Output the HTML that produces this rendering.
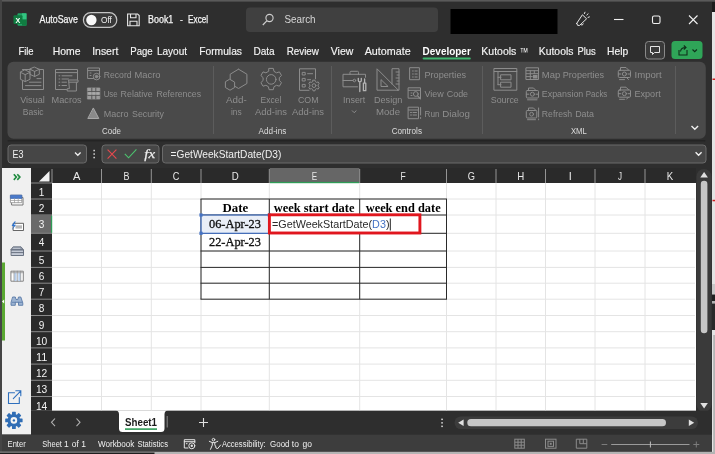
<!DOCTYPE html>
<html lang="en">
<head>
<meta charset="utf-8">
<title>Book1 - Excel</title>
<style>
html,body{margin:0;padding:0;background:#2b2b2b;overflow:hidden}
body{width:715px;height:454px}
svg{display:block;will-change:transform}
text{white-space:pre}
.s{font-family:"Liberation Sans",sans-serif}
.f{font-family:"Liberation Serif",serif}
</style>
</head>
<body>
<svg width="715" height="454" viewBox="0 0 715 454">
<rect x="0" y="0" width="715" height="454" fill="#2e2e2e" />
<rect x="17.5" y="13.3" width="9" height="12.4" fill="#21a366" rx="1" />
<rect x="22" y="13.3" width="4.5" height="6.2" fill="#33c481" />
<rect x="22" y="19.5" width="4.5" height="6.2" fill="#107c41" />
<rect x="13.5" y="15.3" width="9" height="8.8" fill="#107c41" rx="1" />
<text class="s" x="15.6" y="22.6" font-size="7.5" fill="#ffffff" font-weight="bold" textLength="4.8" lengthAdjust="spacingAndGlyphs">X</text>
<text class="s" x="39.5" y="23.4" font-size="10.3" fill="#f4f4f4" stroke="#f4f4f4" stroke-width="0.25" textLength="38.4" lengthAdjust="spacingAndGlyphs">AutoSave</text>
<rect x="83.4" y="12.6" width="33.4" height="14.8" fill="#383838" rx="7.4" stroke="#c4c4c4" stroke-width="1.2" />
<circle cx="91.4" cy="20" r="5.2" fill="#f8f8f8"/>
<text class="s" x="100.9" y="23.1" font-size="9.4" fill="#f0f0f0" textLength="11.0" lengthAdjust="spacingAndGlyphs">Off</text>
<path d="M127.6 14 h10 l1.600 1.600 v10.200 h-11.600 z" stroke="#e6e6e6" fill="none" stroke-width="1.1" />
<path d="M130.500 14 v3.800 h5.500 v-3.800 M130 25.800 v-4.600 h7 v4.600" stroke="#e6e6e6" fill="none" stroke-width="1.1" />
<text class="s" x="148.1" y="23.4" font-size="10.3" fill="#f4f4f4" stroke="#f4f4f4" stroke-width="0.25" textLength="25.2" lengthAdjust="spacingAndGlyphs">Book1</text>
<text class="s" x="181.35" y="23.4" font-size="10.3" fill="#f4f4f4" text-anchor="middle">-</text>
<text class="s" x="188.1" y="23.4" font-size="10.3" fill="#f4f4f4" stroke="#f4f4f4" stroke-width="0.25" textLength="20.1" lengthAdjust="spacingAndGlyphs">Excel</text>
<rect x="246" y="7.5" width="192" height="24.5" fill="#404040" rx="4" />
<circle cx="269.5" cy="18" r="3.6" fill="none" stroke="#d0d0d0" stroke-width="1.1"/>
<line x1="266.8" y1="20.8" x2="262.8" y2="25" stroke="#d0d0d0" stroke-width="1.2" />
<text class="s" x="284.4" y="23" font-size="10.4" fill="#d6d6d6" textLength="31.2" lengthAdjust="spacingAndGlyphs">Search</text>
<rect x="450.5" y="9" width="107" height="25" fill="#000000" />
<path d="M576.7 23.4 L582.4 14.8 L586.6 18.8 L579.6 25.4 Q577.2 26.6 576.7 23.4 Z M580.6 24.7 q1.6 1.4 2.8 -0.7 M584.4 13.6 l0.6 -1.4 M586.8 15 l1.3 -1.2 M588 17.4 l1.4 -0.5" stroke="#e6e6e6" fill="none" stroke-width="1" stroke-linecap="round" stroke-linejoin="round"/>
<line x1="614" y1="19.5" x2="623.5" y2="19.5" stroke="#f0f0f0" stroke-width="1.1" />
<rect x="652.5" y="16" width="7.5" height="7.5" fill="none" rx="1.5" stroke="#f0f0f0" stroke-width="1.1" />
<path d="M689 15.5 l8.5 8.5 M697.5 15.5 l-8.5 8.5" stroke="#f0f0f0" fill="none" stroke-width="1.1" />
<text class="s" x="18.4" y="54.5" font-size="10.4" fill="#f4f4f4" stroke="#f4f4f4" stroke-width="0.15" textLength="15.2" lengthAdjust="spacingAndGlyphs">File</text>
<text class="s" x="52.8" y="54.5" font-size="10.4" fill="#f4f4f4" stroke="#f4f4f4" stroke-width="0.15" textLength="27.8" lengthAdjust="spacingAndGlyphs">Home</text>
<text class="s" x="92.2" y="54.5" font-size="10.4" fill="#f4f4f4" stroke="#f4f4f4" stroke-width="0.15" textLength="26.1" lengthAdjust="spacingAndGlyphs">Insert</text>
<text class="s" x="130.3" y="54.5" font-size="10.4" fill="#f4f4f4" stroke="#f4f4f4" stroke-width="0.15" textLength="22.4" lengthAdjust="spacingAndGlyphs">Page</text>
<text class="s" x="156.9" y="54.5" font-size="10.4" fill="#f4f4f4" stroke="#f4f4f4" stroke-width="0.15" textLength="30.2" lengthAdjust="spacingAndGlyphs">Layout</text>
<text class="s" x="199.2" y="54.5" font-size="10.4" fill="#f4f4f4" stroke="#f4f4f4" stroke-width="0.15" textLength="42.8" lengthAdjust="spacingAndGlyphs">Formulas</text>
<text class="s" x="253.4" y="54.5" font-size="10.4" fill="#f4f4f4" stroke="#f4f4f4" stroke-width="0.15" textLength="21.3" lengthAdjust="spacingAndGlyphs">Data</text>
<text class="s" x="286.7" y="54.5" font-size="10.4" fill="#f4f4f4" stroke="#f4f4f4" stroke-width="0.15" textLength="32.2" lengthAdjust="spacingAndGlyphs">Review</text>
<text class="s" x="330.8" y="54.5" font-size="10.4" fill="#f4f4f4" stroke="#f4f4f4" stroke-width="0.15" textLength="22.5" lengthAdjust="spacingAndGlyphs">View</text>
<text class="s" x="364.7" y="54.5" font-size="10.4" fill="#f4f4f4" stroke="#f4f4f4" stroke-width="0.15" textLength="46.0" lengthAdjust="spacingAndGlyphs">Automate</text>
<text class="s" x="481.3" y="54.5" font-size="10.4" fill="#f4f4f4" stroke="#f4f4f4" stroke-width="0.15" textLength="35.1" lengthAdjust="spacingAndGlyphs">Kutools</text>
<text class="s" x="538.8" y="54.5" font-size="10.4" fill="#f4f4f4" stroke="#f4f4f4" stroke-width="0.15" textLength="34.6" lengthAdjust="spacingAndGlyphs">Kutools</text>
<text class="s" x="577.5" y="54.5" font-size="10.4" fill="#f4f4f4" stroke="#f4f4f4" stroke-width="0.15" textLength="18.3" lengthAdjust="spacingAndGlyphs">Plus</text>
<text class="s" x="607" y="54.5" font-size="10.4" fill="#f4f4f4" stroke="#f4f4f4" stroke-width="0.15" textLength="21.2" lengthAdjust="spacingAndGlyphs">Help</text>
<text class="s" x="519.7" y="55.6" font-size="12" fill="#f4f4f4" textLength="8.5" lengthAdjust="spacingAndGlyphs">™</text>
<text class="s" x="422.6" y="54.5" font-size="10.4" fill="#ffffff" font-weight="bold" textLength="48.2" lengthAdjust="spacingAndGlyphs">Developer</text>
<rect x="422.6" y="57.5" width="48.2" height="2" fill="#3fb56e" rx="1" />
<rect x="645.5" y="41.5" width="19" height="17.5" fill="#3a3a3a" rx="3" stroke="#8a8a8a" stroke-width="1" />
<path d="M650.5 46.5 h9 v6 h-5 l-2 2 v-2 h-2 z" stroke="#e6e6e6" fill="none" stroke-width="1" />
<rect x="671.5" y="41" width="31" height="18" fill="#2fa558" rx="3.5" />
<path d="M679 50 v5 h8 v-5 M680.5 51.5 q0.5 -4 5 -4 M683.8 45.5 l2.2 2 l-2.2 2" stroke="#0f2f1a" fill="none" stroke-width="1.1" />
<path d="M692.5 49.5 l2.2 2.2 l2.2 -2.2" stroke="#0f2f1a" fill="none" stroke-width="1.2" />
<rect x="7.5" y="140" width="698" height="1.6" fill="#242424" rx="0.8" />
<rect x="7.5" y="61.8" width="698.3" height="77" fill="#4a4a4a" rx="6" />
<line x1="213.5" y1="66" x2="213.5" y2="134" stroke="#5c5c5c" stroke-width="1" />
<line x1="331.5" y1="66" x2="331.5" y2="134" stroke="#5c5c5c" stroke-width="1" />
<line x1="482.5" y1="66" x2="482.5" y2="134" stroke="#5c5c5c" stroke-width="1" />
<line x1="675.5" y1="66" x2="675.5" y2="134" stroke="#5c5c5c" stroke-width="1" />
<text class="s" x="20.2" y="103" font-size="9.4" fill="#8e8e8e" textLength="24.6" lengthAdjust="spacingAndGlyphs">Visual</text>
<text class="s" x="22.7" y="115.4" font-size="9.4" fill="#8e8e8e" textLength="20.9" lengthAdjust="spacingAndGlyphs">Basic</text>
<text class="s" x="51.6" y="103" font-size="9.4" fill="#8e8e8e" textLength="30.0" lengthAdjust="spacingAndGlyphs">Macros</text>
<text class="s" x="103.7" y="77.6" font-size="9.4" fill="#8e8e8e" textLength="27.9" lengthAdjust="spacingAndGlyphs">Record</text>
<text class="s" x="134.5" y="77.6" font-size="9.4" fill="#8e8e8e" textLength="26.0" lengthAdjust="spacingAndGlyphs">Macro</text>
<text class="s" x="103.7" y="97.2" font-size="9.4" fill="#8e8e8e" textLength="13.9" lengthAdjust="spacingAndGlyphs">Use</text>
<text class="s" x="120.6" y="97.2" font-size="9.4" fill="#8e8e8e" textLength="32.0" lengthAdjust="spacingAndGlyphs">Relative</text>
<text class="s" x="156.5" y="97.2" font-size="9.4" fill="#8e8e8e" textLength="44.5" lengthAdjust="spacingAndGlyphs">References</text>
<text class="s" x="103.7" y="116.9" font-size="9.4" fill="#8e8e8e" textLength="24.9" lengthAdjust="spacingAndGlyphs">Macro</text>
<text class="s" x="132" y="116.9" font-size="9.4" fill="#8e8e8e" textLength="31.9" lengthAdjust="spacingAndGlyphs">Security</text>
<text class="s" x="102" y="133.8" font-size="9.2" fill="#dcdcdc" textLength="19" lengthAdjust="spacingAndGlyphs">Code</text>
<text class="s" x="226" y="103" font-size="9.4" fill="#8e8e8e" textLength="20.7" lengthAdjust="spacingAndGlyphs">Add-</text>
<text class="s" x="231" y="115.4" font-size="9.4" fill="#8e8e8e" textLength="10.7" lengthAdjust="spacingAndGlyphs">ins</text>
<text class="s" x="260.6" y="103" font-size="9.4" fill="#8e8e8e" textLength="20.7" lengthAdjust="spacingAndGlyphs">Excel</text>
<text class="s" x="255" y="115.4" font-size="9.4" fill="#8e8e8e" textLength="32" lengthAdjust="spacingAndGlyphs">Add-ins</text>
<text class="s" x="297.9" y="103" font-size="9.4" fill="#8e8e8e" textLength="20.6" lengthAdjust="spacingAndGlyphs">COM</text>
<text class="s" x="292" y="115.4" font-size="9.4" fill="#8e8e8e" textLength="32" lengthAdjust="spacingAndGlyphs">Add-ins</text>
<text class="s" x="258.6" y="133.8" font-size="9.2" fill="#dcdcdc" textLength="27.7" lengthAdjust="spacingAndGlyphs">Add-ins</text>
<text class="s" x="343" y="103" font-size="9.4" fill="#8e8e8e" textLength="22.3" lengthAdjust="spacingAndGlyphs">Insert</text>
<path d="M352 110.5 l2.2 2.2 l2.2 -2.2" stroke="#8e8e8e" fill="none" stroke-width="1" />
<text class="s" x="374" y="103" font-size="9.4" fill="#8e8e8e" textLength="28.3" lengthAdjust="spacingAndGlyphs">Design</text>
<text class="s" x="376" y="115.4" font-size="9.4" fill="#8e8e8e" textLength="24" lengthAdjust="spacingAndGlyphs">Mode</text>
<text class="s" x="424.5" y="77.6" font-size="9.4" fill="#8e8e8e" textLength="41.5" lengthAdjust="spacingAndGlyphs">Properties</text>
<text class="s" x="424.5" y="97.2" font-size="9.4" fill="#8e8e8e" textLength="19.2" lengthAdjust="spacingAndGlyphs">View</text>
<text class="s" x="446.7" y="97.2" font-size="9.4" fill="#8e8e8e" textLength="21.4" lengthAdjust="spacingAndGlyphs">Code</text>
<text class="s" x="424.5" y="116.9" font-size="9.4" fill="#8e8e8e" textLength="15.0" lengthAdjust="spacingAndGlyphs">Run</text>
<text class="s" x="442.3" y="116.9" font-size="9.4" fill="#8e8e8e" textLength="27.6" lengthAdjust="spacingAndGlyphs">Dialog</text>
<text class="s" x="391.7" y="133.8" font-size="9.2" fill="#dcdcdc" textLength="30.3" lengthAdjust="spacingAndGlyphs">Controls</text>
<text class="s" x="490.8" y="103" font-size="9.4" fill="#8e8e8e" textLength="28.0" lengthAdjust="spacingAndGlyphs">Source</text>
<text class="s" x="541.8" y="77.6" font-size="9.4" fill="#8e8e8e" textLength="18.4" lengthAdjust="spacingAndGlyphs">Map</text>
<text class="s" x="562.8" y="77.6" font-size="9.4" fill="#8e8e8e" textLength="41.3" lengthAdjust="spacingAndGlyphs">Properties</text>
<text class="s" x="541.8" y="97.2" font-size="9.4" fill="#8e8e8e" textLength="41.5" lengthAdjust="spacingAndGlyphs">Expansion</text>
<text class="s" x="585.8" y="97.2" font-size="9.4" fill="#8e8e8e" textLength="21.5" lengthAdjust="spacingAndGlyphs">Packs</text>
<text class="s" x="541.8" y="116.9" font-size="9.4" fill="#8e8e8e" textLength="30.4" lengthAdjust="spacingAndGlyphs">Refresh</text>
<text class="s" x="575.2" y="116.9" font-size="9.4" fill="#8e8e8e" textLength="18.8" lengthAdjust="spacingAndGlyphs">Data</text>
<text class="s" x="634.5" y="77.6" font-size="9.4" fill="#8e8e8e" textLength="27.2" lengthAdjust="spacingAndGlyphs">Import</text>
<text class="s" x="634.5" y="97.2" font-size="9.4" fill="#8e8e8e" textLength="26.2" lengthAdjust="spacingAndGlyphs">Export</text>
<text class="s" x="571" y="133.8" font-size="9.2" fill="#dcdcdc" textLength="15.8" lengthAdjust="spacingAndGlyphs">XML</text>
<path d="M691.5 126 l3.3 3.3 l3.3 -3.3" stroke="#f0f0f0" fill="none" stroke-width="1.4" />
<g fill="none" stroke="#8c8c8c" stroke-width="1" stroke-linejoin="round" stroke-linecap="round">
<!-- Visual Basic -->
<path d="M31 69.5 h-8.5 M39.5 69.5 h4 v20 h-21 v-8.5"/>
<path d="M25.2 70 l4.8 2.300 v7 l-4.800 2.300 l-4.800 -2.300 v-7 z M20.400 72.300 l4.800 2.300 l4.800 -2.300 M25.200 74.600 v7"/>
<path d="M34.600 67.200 l4.700 2.100 v5 l-4.700 2.200 l-4.700 -2.200 v-5 z M29.900 69.300 l4.700 2.100 l4.700 -2.100 M34.600 71.400 v5.100"/>
<path d="M37 78.6 h4 M29.5 82.2 h11.5 M25.5 85.6 h15.5"/>
<!-- Macros -->
<path d="M66.5 89.5 h-11 v-20 h22 v10 M55.5 72.6 h22"/>
<path d="M59 75.8 h.8 M62 75.8 h10 M59 79 h.8 M62 79 h6.5 M59 82.2 h.8 M62 82.2 h4.5 M59 85.5 h.8 M62 85.5 h4.5"/>
<path d="M69 80 h9 v2.2 h-1.6 v8.8 h-9.2 v-2.3 h1.8 z M76.4 82.2 h-7.4"/>
<!-- Record macro -->
<rect x="88" y="68" width="11.5" height="10.5"/>
<path d="M88 70.6 h11.5 M90 73 h1 M90 75.5 h1"/>
<circle cx="96.6" cy="76.6" r="3.3" fill="#4a4a4a"/>
<circle cx="96.6" cy="76.6" r="1.3" fill="#8c8c8c"/>
<!-- Use relative refs -->
<rect x="87.800" y="88" width="12" height="11" fill="#9c9c9c" stroke="#9c9c9c" stroke-width="0.800"/>
<path d="M91.800 88 v11 M95.800 88 v11 M87.800 91.600 h12 M87.800 95.300 h12" stroke="#555555" stroke-width="1"/>
<rect x="88.300" y="92.100" width="11" height="2.700" fill="#b4b4b4" stroke="none" opacity="0.600"/>
<!-- Macro security -->
<path d="M93.5 108.3 l5.3 10.2 h-10.6 z" fill="#8a8a8a" stroke="#a8a8a8"/>
<!-- Add-ins -->
<path d="M238.5 69.2 l8.4 5 v9.3 l-8.4 5 l-3.6 -2.2 M230.2 79 v-4.8 l8.3 -5"/>
<path d="M230 79.4 l4.6 2.7 v5.4 l-4.6 2.7 l-4.6 -2.7 v-5.4 z"/>
<!-- Excel add-ins gear -->
<circle cx="271.2" cy="79.4" r="4.8"/>
<path id="gearL" d="M269.1 68.4 h4.2 l0.7 3 l2.5 1.4 l2.9 -0.9 l2.1 3.6 l-2.2 2.1 v2.9 l2.2 2.1 l-2.1 3.6 l-2.9 -0.9 l-2.5 1.4 l-0.7 3 h-4.2 l-0.7 -3 l-2.5 -1.4 l-2.9 0.9 l-2.1 -3.6 l2.2 -2.1 v-2.9 l-2.2 -2.1 l2.1 -3.6 l2.9 0.9 l2.5 -1.4 z"/>
<!-- COM add-ins -->
<path d="M309 90.3 h-9.5 v-21.5 h16 v10"/>
<path d="M302.6 72.4 h2.6 v2.6 h-2.6 z M302.6 78.4 h2.6 v2.6 h-2.6 z M302.6 84.4 h2.6 v2.6 h-2.6 z M307.6 73.7 h5 M307.6 79.7 h3"/>
<circle cx="314" cy="85.6" r="2"/>
<path d="M313 80.2 h2 l0.4 1.5 l1.3 0.7 l1.5 -0.5 l1 1.8 l-1.1 1 v1.6 l1.1 1 l-1 1.8 l-1.5 -0.5 l-1.3 0.7 l-0.4 1.5 h-2 l-0.4 -1.5 l-1.3 -0.7 l-1.5 0.5 l-1 -1.8 l1.1 -1 v-1.6 l-1.1 -1 l1 -1.8 l1.5 0.5 l1.3 -0.7 z" fill="#4a4a4a"/>
<circle cx="314" cy="85.6" r="1.9"/>
<!-- Insert toolbox -->
<path d="M357.5 86.8 h-14.5 v-12.5 h22.5 v3 M350 74.3 v-2 q0 -1 1 -1 h6.500 q1 0 1 1 v2"/>
<path d="M343 80.5 h10"/>
<circle cx="354.4" cy="80.5" r="1.3"/>
<g stroke="#b4b4b4" stroke-width="1.3">
<path d="M358.3 78.3 v2.2 q0 1.3 1.5 1.3 q1.500 0 1.500 -1.300 v-2.200 M359.800 82 v9.500"/>
<path d="M364.600 79 v4 M363.400 83.200 h2.400 v7.500 h-2.400 z"/>
</g>
<!-- Design mode -->
<path d="M377 69.200 v21 h21 z M381 80 v6.500 h6.700 z"/>
<path d="M392 84 v-15.300 h7 v21.500 h-1.500"/>
<path d="M396 72 h3 M397 75 h2 M396 78 h3 M397 81 h2 M396 84 h3"/>
<!-- Properties -->
<rect x="410" y="67.700" width="9.400" height="12"/>
<path d="M412.500 71 h.8 M415 71 h2.200 M412.500 74 h.8 M415 74 h2.200 M412.500 77 h.8 M415 77 h2.200"/>
<!-- View code -->
<rect x="408.500" y="87.800" width="12" height="10.400"/>
<path d="M408.500 90.300 h12 M411 93 h1 M411 95.500 h1"/>
<circle cx="415.800" cy="94" r="2.400"/>
<path d="M417.600 95.900 l2.800 2.800" stroke-width="1.300"/>
<!-- Run dialog -->
<rect x="408.500" y="107.200" width="10" height="11.500"/>
<path d="M408.500 110 h10 M410.500 112.500 h1 M413 112.500 h3.500 M410.500 115 h1 M413 115 h3.500 M420.600 107.500 v7.500 M420.600 117.500 v1"/>
<!-- Source -->
<rect x="494.300" y="68.500" width="22.500" height="21.700"/>
<path d="M494.300 71.500 h22.500 M498 71.500 v13.200 M498 77.300 h3 M498 84.700 h3"/>
<rect x="501" y="74.800" width="10" height="5"/>
<rect x="501" y="82.200" width="10" height="5"/>
<!-- Map properties -->
<rect x="526.300" y="67.800" width="12.200" height="11.700"/>
<path d="M526.300 70.700 h12.200 M526.300 73.700 h12.200 M526.300 76.600 h6 M530.300 70.700 v8.800 M534.300 70.700 v3"/>
<rect x="533" y="75" width="4.500" height="3.500" fill="#8c8c8c" stroke="none"/>
<!-- Expansion packs -->
<path d="M528.500 90.500 v-2.500 h5 l2.500 2.500"/>
<rect x="526.300" y="90.500" width="12.200" height="7.500" rx="1"/>
<circle cx="532.400" cy="94.200" r="2"/>
<path d="M527.500 99.800 h9.500 M526.300 94.200 h2.500 M536 94.200 h2.500"/>
<!-- Refresh data -->
<path d="M528.500 110.500 v-2.500 h5 l2.500 2.500"/>
<rect x="526.300" y="110.500" width="10.500" height="7.500" rx="1"/>
<circle cx="531.600" cy="114.200" r="1.900"/>
<path d="M527.500 119.700 h8 M538.600 108 v9 M538.600 119 v0.800"/>
<!-- Import -->
<path d="M620.500 70.500 v-3 h5.500 l2.500 2.500"/>
<rect x="618.300" y="70.300" width="12.200" height="7.200" rx="1"/>
<circle cx="624.400" cy="74" r="2"/>
<path d="M619.500 79.600 h5 M626.500 77.500 l2 2 M618.300 74 h2.500 M628 74 h2.500"/>
<!-- Export -->
<path d="M620.500 90.200 v-3 h5.500 l2.500 2.500"/>
<rect x="618.300" y="90" width="12.200" height="7.200" rx="1"/>
<circle cx="624.400" cy="93.700" r="2"/>
<path d="M619.500 99.300 h5 M626.500 99.200 l2 -2 M618.300 93.700 h2.500 M628 93.700 h2.500"/>
</g>

<rect x="8" y="145" width="78.5" height="18" fill="#464646" rx="3" stroke="#6a6a6a" stroke-width="1" />
<text class="s" x="12.5" y="157.8" font-size="10.2" fill="#f0f0f0" textLength="11.0" lengthAdjust="spacingAndGlyphs">E3</text>
<path d="M75 152.5 l2.8 2.8 l2.8 -2.8" stroke="#f0f0f0" fill="none" stroke-width="1.3" />
<rect x="93.4" y="149.8" width="1.5" height="1.5" fill="#d8d8d8" />
<rect x="93.4" y="153.3" width="1.5" height="1.5" fill="#d8d8d8" />
<rect x="93.4" y="156.8" width="1.5" height="1.5" fill="#d8d8d8" />
<rect x="102" y="145" width="57" height="18" fill="#464646" rx="3" stroke="#6a6a6a" stroke-width="1" />
<path d="M107.6 149.6 l8.8 9 M116.4 149.6 l-8.8 9" stroke="#e5484d" fill="none" stroke-width="1.1" />
<path d="M124.8 153.8 l3.8 4 l7.8 -8.4" stroke="#4cc36f" fill="none" stroke-width="1.1" />
<text class="f" x="144.3" y="158" font-size="13.5" fill="#ececec" font-style="italic" stroke="#ececec" stroke-width="0.25" textLength="10.9" lengthAdjust="spacingAndGlyphs">fx</text>
<rect x="162.5" y="145" width="543.5" height="18" fill="#464646" rx="3" stroke="#6a6a6a" stroke-width="1" />
<text class="s" x="170.6" y="157.8" font-size="10.2" fill="#f0f0f0" textLength="110.7" lengthAdjust="spacingAndGlyphs">=GetWeekStartDate(D3)</text>
<path d="M695.6 152.2 l3 3 l3 -3" stroke="#f0f0f0" fill="none" stroke-width="1.4" />
<rect x="1" y="168" width="30" height="266.5" fill="#f0f0f0" />
<rect x="1.6" y="262.5" width="3.4" height="78" fill="#5aa832" />
<path d="M2 301.5 l2.2 -2 v4 z" stroke="none" fill="#ffffff" stroke-width="1" />
<g fill="none" stroke-linejoin="round" stroke-linecap="round">
<!-- chevrons -->
<path d="M13.800 174.300 l2.600 2.800 l-2.600 2.800 M17.300 174.300 l2.600 2.800 l-2.600 2.800" stroke="#1f8b3f" stroke-width="1.600" stroke-linecap="butt" stroke-linejoin="miter"/>
<!-- table icon -->
<rect x="12" y="197.500" width="11" height="7.500" fill="#ffffff" stroke="#6a6a6a" stroke-width="0.900"/>
<rect x="10.800" y="195.200" width="11" height="7.500" fill="#ffffff" stroke="#8a8a8a" stroke-width="0.800"/>
<rect x="10.800" y="195.200" width="11" height="3.200" fill="#4a7acb" stroke="#3c68b4" stroke-width="0.800"/>
<path d="M14.500 198.400 v4.300 M18.200 198.400 v4.300 M10.800 200.500 h11" stroke="#9a9a9a" stroke-width="0.700"/>
<!-- lightning text box -->
<rect x="13.500" y="223.300" width="10" height="7.200" fill="#ffffff" stroke="#555555" stroke-width="0.900"/>
<rect x="15.500" y="225.300" width="6.500" height="3.300" fill="#b8b8b8" stroke="none"/>
<path d="M14.500 221.500 l-3 4.500 h2.200 l-1.800 4 l4.200 -5.300 h-2.200 l2 -3.200 z" fill="#2f74d0" stroke="none"/>
<!-- printer / stack -->
<path d="M13.500 246.800 h7.500 l2.500 3 h-12.500 z" fill="#8d96a6" stroke="#5f6878" stroke-width="0.800"/>
<path d="M11.500 250 h12 v5.500 h-12 z" fill="#c4cad6" stroke="#5f6878" stroke-width="0.900"/>
<path d="M11.500 252.600 h12" stroke="#5f6878" stroke-width="0.900"/>
<path d="M13.500 248.300 h6.500" stroke="#dfe3ea" stroke-width="0.700"/>
<!-- columns -->
<rect x="11.300" y="271.200" width="12" height="10" fill="#ffffff" stroke="#777777" stroke-width="0.900"/>
<rect x="14.300" y="272.600" width="2.200" height="8.400" fill="#b8d0ee" stroke="none"/>
<rect x="18.300" y="272.600" width="2.200" height="8.400" fill="#b8d0ee" stroke="none"/>
<path d="M11.300 272.700 h12 M14 271.200 v10 M17.300 271.200 v10 M20.700 271.200 v10" stroke="#8a8a8a" stroke-width="0.700"/>
<!-- binoculars -->
<path d="M13 297 h2.300 l0.700 2.500 h1.800 l0.700 -2.500 h2.300 l2 6 v2.300 h-4.300 v-3 h-3.200 v3 h-4.300 v-2.300 z" fill="#9db4d2" stroke="#5a7aa8" stroke-width="0.900"/>
<path d="M12 302.300 h3.500 M18.300 302.300 h3.500" stroke="#5a7aa8" stroke-width="0.800"/>
<!-- pop-out -->
<path d="M14.500 392.700 h-6 v10.800 h10.800 v-6" stroke="#2e6fbd" stroke-width="1.100" stroke-linejoin="miter"/>
<path d="M13.300 398.700 l7.300 -7.600 M15.800 390.700 h5 v5" stroke="#2e6fbd" stroke-width="1.100" stroke-linejoin="miter"/>
<!-- gear -->
<g transform="translate(13.900 420.400)">
<g fill="#2f6db5" stroke="none">
<circle r="6.300"/>
<rect x="-1.900" y="-8.700" width="3.800" height="17.400" rx="0.600"/>
<rect x="-1.900" y="-8.700" width="3.800" height="17.400" rx="0.600" transform="rotate(45)"/>
<rect x="-1.900" y="-8.700" width="3.800" height="17.400" rx="0.600" transform="rotate(90)"/>
<rect x="-1.900" y="-8.700" width="3.800" height="17.400" rx="0.600" transform="rotate(135)"/>
</g>
<circle r="3.300" fill="#f4f4f4"/>
<circle r="1.200" fill="#2f6db5"/>
</g>
</g>

<rect x="31" y="168" width="665" height="242.8" fill="#ffffff" />
<rect x="31" y="168" width="665" height="15" fill="#2a2a2a" />
<rect x="31" y="183" width="21" height="227.8" fill="#2a2a2a" />
<rect x="269.8" y="168" width="89.5" height="14" fill="#666666" />
<rect x="269.8" y="181.9" width="89.5" height="1.3" fill="#2f9c57" />
<rect x="31" y="215.5" width="20.5" height="17.5" fill="#6a6a6a" />
<rect x="51" y="215.5" width="1.2" height="17.5" fill="#2f9c57" />
<line x1="101.5" y1="183" x2="101.5" y2="410.8" stroke="#e4e4e4" stroke-width="1" />
<line x1="151.3" y1="183" x2="151.3" y2="410.8" stroke="#e4e4e4" stroke-width="1" />
<line x1="201" y1="183" x2="201" y2="410.8" stroke="#e4e4e4" stroke-width="1" />
<line x1="269.3" y1="183" x2="269.3" y2="410.8" stroke="#e4e4e4" stroke-width="1" />
<line x1="359.7" y1="183" x2="359.7" y2="410.8" stroke="#e4e4e4" stroke-width="1" />
<line x1="446.5" y1="183" x2="446.5" y2="410.8" stroke="#e4e4e4" stroke-width="1" />
<line x1="496" y1="183" x2="496" y2="410.8" stroke="#e4e4e4" stroke-width="1" />
<line x1="545.5" y1="183" x2="545.5" y2="410.8" stroke="#e4e4e4" stroke-width="1" />
<line x1="595" y1="183" x2="595" y2="410.8" stroke="#e4e4e4" stroke-width="1" />
<line x1="645" y1="183" x2="645" y2="410.8" stroke="#e4e4e4" stroke-width="1" />
<line x1="52" y1="199" x2="695" y2="199" stroke="#e4e4e4" stroke-width="1" />
<line x1="52" y1="215" x2="695" y2="215" stroke="#e4e4e4" stroke-width="1" />
<line x1="52" y1="233.3" x2="695" y2="233.3" stroke="#e4e4e4" stroke-width="1" />
<line x1="52" y1="251" x2="695" y2="251" stroke="#e4e4e4" stroke-width="1" />
<line x1="52" y1="267.4" x2="695" y2="267.4" stroke="#e4e4e4" stroke-width="1" />
<line x1="52" y1="283.2" x2="695" y2="283.2" stroke="#e4e4e4" stroke-width="1" />
<line x1="52" y1="299.2" x2="695" y2="299.2" stroke="#e4e4e4" stroke-width="1" />
<line x1="52" y1="315.5" x2="695" y2="315.5" stroke="#e4e4e4" stroke-width="1" />
<line x1="52" y1="331.7" x2="695" y2="331.7" stroke="#e4e4e4" stroke-width="1" />
<line x1="52" y1="347.9" x2="695" y2="347.9" stroke="#e4e4e4" stroke-width="1" />
<line x1="52" y1="364.1" x2="695" y2="364.1" stroke="#e4e4e4" stroke-width="1" />
<line x1="52" y1="380.3" x2="695" y2="380.3" stroke="#e4e4e4" stroke-width="1" />
<line x1="52" y1="396.5" x2="695" y2="396.5" stroke="#e4e4e4" stroke-width="1" />
<line x1="52" y1="169" x2="52" y2="183" stroke="#a0a0a0" stroke-width="0.9" />
<line x1="101.5" y1="169" x2="101.5" y2="183" stroke="#a0a0a0" stroke-width="0.9" />
<line x1="151.3" y1="169" x2="151.3" y2="183" stroke="#a0a0a0" stroke-width="0.9" />
<line x1="201" y1="169" x2="201" y2="183" stroke="#a0a0a0" stroke-width="0.9" />
<line x1="269.3" y1="169" x2="269.3" y2="183" stroke="#a0a0a0" stroke-width="0.9" />
<line x1="359.7" y1="169" x2="359.7" y2="183" stroke="#a0a0a0" stroke-width="0.9" />
<line x1="446.5" y1="169" x2="446.5" y2="183" stroke="#a0a0a0" stroke-width="0.9" />
<line x1="496" y1="169" x2="496" y2="183" stroke="#a0a0a0" stroke-width="0.9" />
<line x1="545.5" y1="169" x2="545.5" y2="183" stroke="#a0a0a0" stroke-width="0.9" />
<line x1="595" y1="169" x2="595" y2="183" stroke="#a0a0a0" stroke-width="0.9" />
<line x1="645" y1="169" x2="645" y2="183" stroke="#a0a0a0" stroke-width="0.9" />
<line x1="31" y1="183" x2="52" y2="183" stroke="#8a8a8a" stroke-width="1" />
<line x1="31" y1="199" x2="52" y2="199" stroke="#8a8a8a" stroke-width="1" />
<line x1="31" y1="215" x2="52" y2="215" stroke="#8a8a8a" stroke-width="1" />
<line x1="31" y1="233.3" x2="52" y2="233.3" stroke="#8a8a8a" stroke-width="1" />
<line x1="31" y1="251" x2="52" y2="251" stroke="#8a8a8a" stroke-width="1" />
<line x1="31" y1="267.4" x2="52" y2="267.4" stroke="#8a8a8a" stroke-width="1" />
<line x1="31" y1="283.2" x2="52" y2="283.2" stroke="#8a8a8a" stroke-width="1" />
<line x1="31" y1="299.2" x2="52" y2="299.2" stroke="#8a8a8a" stroke-width="1" />
<line x1="31" y1="315.5" x2="52" y2="315.5" stroke="#8a8a8a" stroke-width="1" />
<line x1="31" y1="331.7" x2="52" y2="331.7" stroke="#8a8a8a" stroke-width="1" />
<line x1="31" y1="347.9" x2="52" y2="347.9" stroke="#8a8a8a" stroke-width="1" />
<line x1="31" y1="364.1" x2="52" y2="364.1" stroke="#8a8a8a" stroke-width="1" />
<line x1="31" y1="380.3" x2="52" y2="380.3" stroke="#8a8a8a" stroke-width="1" />
<line x1="31" y1="396.5" x2="52" y2="396.5" stroke="#8a8a8a" stroke-width="1" />
<path d="M49.5 171 v10.5 h-10.5 z" stroke="none" fill="#f2f2f2" stroke-width="1" />
<text class="s" x="73.05" y="180" font-size="11" fill="#e8e8e8" textLength="7.4" lengthAdjust="spacingAndGlyphs">A</text>
<text class="s" x="123.4" y="180" font-size="11" fill="#e8e8e8" textLength="6.0" lengthAdjust="spacingAndGlyphs">B</text>
<text class="s" x="172.85" y="180" font-size="11" fill="#e8e8e8" textLength="6.6" lengthAdjust="spacingAndGlyphs">C</text>
<text class="s" x="231.65" y="180" font-size="11" fill="#e8e8e8" textLength="7.0" lengthAdjust="spacingAndGlyphs">D</text>
<text class="s" x="311.8" y="180" font-size="11" fill="#e8e8e8" textLength="5.4" lengthAdjust="spacingAndGlyphs">E</text>
<text class="s" x="400.5" y="180" font-size="11" fill="#e8e8e8" textLength="5.2" lengthAdjust="spacingAndGlyphs">F</text>
<text class="s" x="467.65" y="180" font-size="11" fill="#e8e8e8" textLength="7.2" lengthAdjust="spacingAndGlyphs">G</text>
<text class="s" x="517.25" y="180" font-size="11" fill="#e8e8e8" textLength="7.0" lengthAdjust="spacingAndGlyphs">H</text>
<text class="s" x="570.25" y="180" font-size="11" fill="#e8e8e8" text-anchor="middle">I</text>
<text class="s" x="618.0" y="180" font-size="11" fill="#e8e8e8" textLength="4.0" lengthAdjust="spacingAndGlyphs">J</text>
<text class="s" x="666.8" y="180" font-size="11" fill="#e8e8e8" textLength="6.4" lengthAdjust="spacingAndGlyphs">K</text>
<text class="s" x="38.800000000000004" y="195.8" font-size="11" fill="#f4f4f4" textLength="5.6" lengthAdjust="spacingAndGlyphs">1</text>
<text class="s" x="38.800000000000004" y="211.8" font-size="11" fill="#f4f4f4" textLength="5.6" lengthAdjust="spacingAndGlyphs">2</text>
<text class="s" x="38.800000000000004" y="228.10000000000002" font-size="11" fill="#f4f4f4" textLength="5.6" lengthAdjust="spacingAndGlyphs">3</text>
<text class="s" x="38.800000000000004" y="245.8" font-size="11" fill="#f4f4f4" textLength="5.6" lengthAdjust="spacingAndGlyphs">4</text>
<text class="s" x="38.800000000000004" y="264.2" font-size="11" fill="#f4f4f4" textLength="5.6" lengthAdjust="spacingAndGlyphs">5</text>
<text class="s" x="38.800000000000004" y="280.0" font-size="11" fill="#f4f4f4" textLength="5.6" lengthAdjust="spacingAndGlyphs">6</text>
<text class="s" x="38.800000000000004" y="296.0" font-size="11" fill="#f4f4f4" textLength="5.6" lengthAdjust="spacingAndGlyphs">7</text>
<text class="s" x="38.800000000000004" y="312.3" font-size="11" fill="#f4f4f4" textLength="5.6" lengthAdjust="spacingAndGlyphs">8</text>
<text class="s" x="38.800000000000004" y="328.5" font-size="11" fill="#f4f4f4" textLength="5.6" lengthAdjust="spacingAndGlyphs">9</text>
<text class="s" x="35.9" y="344.7" font-size="11" fill="#f4f4f4" textLength="11.4" lengthAdjust="spacingAndGlyphs">10</text>
<text class="s" x="35.9" y="360.90000000000003" font-size="11" fill="#f4f4f4" textLength="11.4" lengthAdjust="spacingAndGlyphs">11</text>
<text class="s" x="35.9" y="377.1" font-size="11" fill="#f4f4f4" textLength="11.4" lengthAdjust="spacingAndGlyphs">12</text>
<text class="s" x="35.9" y="393.3" font-size="11" fill="#f4f4f4" textLength="11.4" lengthAdjust="spacingAndGlyphs">13</text>
<text class="s" x="35.9" y="409.5" font-size="11" fill="#f4f4f4" textLength="11.4" lengthAdjust="spacingAndGlyphs">14</text>
<line x1="200.5" y1="199" x2="447" y2="199" stroke="#2a2a2a" stroke-width="1" />
<line x1="200.5" y1="215" x2="447" y2="215" stroke="#2a2a2a" stroke-width="1" />
<line x1="200.5" y1="233.3" x2="447" y2="233.3" stroke="#2a2a2a" stroke-width="1" />
<line x1="200.5" y1="251" x2="447" y2="251" stroke="#2a2a2a" stroke-width="1" />
<line x1="200.5" y1="267.4" x2="447" y2="267.4" stroke="#2a2a2a" stroke-width="1" />
<line x1="200.5" y1="283.2" x2="447" y2="283.2" stroke="#2a2a2a" stroke-width="1" />
<line x1="200.5" y1="299.2" x2="447" y2="299.2" stroke="#2a2a2a" stroke-width="1" />
<line x1="201" y1="199" x2="201" y2="299.2" stroke="#2a2a2a" stroke-width="1" />
<line x1="269.3" y1="199" x2="269.3" y2="299.2" stroke="#2a2a2a" stroke-width="1" />
<line x1="359.7" y1="199" x2="359.7" y2="299.2" stroke="#2a2a2a" stroke-width="1" />
<line x1="446.5" y1="199" x2="446.5" y2="299.2" stroke="#2a2a2a" stroke-width="1" />
<rect x="201.5" y="215.5" width="67.5" height="17.5" fill="#e9eef7" />
<rect x="201" y="215" width="68.5" height="18.3" fill="none" stroke="#4472c4" stroke-width="1.2" />
<rect x="199.4" y="213.4" width="3.2" height="3.2" fill="#4472c4" />
<rect x="199.4" y="231.70000000000002" width="3.2" height="3.2" fill="#4472c4" />
<rect x="267.7" y="213.4" width="3.2" height="3.2" fill="#4472c4" />
<text class="f" x="222.5" y="211.9" font-size="12" fill="#000000" font-weight="bold" textLength="25.7" lengthAdjust="spacingAndGlyphs">Date</text>
<text class="f" x="273.7" y="211.9" font-size="12" fill="#000000" font-weight="bold" textLength="80.8" lengthAdjust="spacingAndGlyphs">week start date</text>
<text class="f" x="365.7" y="211.9" font-size="12" fill="#000000" font-weight="bold" textLength="75.0" lengthAdjust="spacingAndGlyphs">week end date</text>
<text class="f" x="209" y="227.6" font-size="11.6" fill="#111111" stroke="#111111" stroke-width="0.3" textLength="52" lengthAdjust="spacingAndGlyphs">06-Apr-23</text>
<text class="f" x="209" y="245.5" font-size="11.6" fill="#111111" stroke="#111111" stroke-width="0.3" textLength="52" lengthAdjust="spacingAndGlyphs">22-Apr-23</text>
<rect x="270" y="215.5" width="149.5" height="17.5" fill="#ffffff" />
<rect x="269.4" y="214.8" width="150.5" height="18.2" fill="none" stroke="#e0161e" stroke-width="2.9" />
<text class="s" x="272" y="227.8" font-size="10.6" fill="#2a2a2a" textLength="117.5" lengthAdjust="spacingAndGlyphs">=GetWeekStartDate(<tspan fill="#4472c4">D3</tspan>)</text>
<line x1="390.3" y1="218.5" x2="390.3" y2="230.5" stroke="#222222" stroke-width="1" />
<rect x="696" y="168" width="16" height="243" fill="#2e2e2e" />
<rect x="696.5" y="169" width="15" height="243" fill="#3a3a3a" rx="7.5" />
<path d="M700.3 177.6 h7.6 l-3.8 -5.6 z" stroke="none" fill="#e0e0e0" stroke-width="1" />
<rect x="700.8" y="180.8" width="6.6" height="152.4" fill="#c6c6c6" rx="3.3" />
<path d="M700.3 403 h7.6 l-3.8 5.4 z" stroke="none" fill="#e0e0e0" stroke-width="1" />
<rect x="31" y="410.8" width="681" height="24" fill="#2e2e2e" />
<path d="M55 418.5 l-3.5 3.8 l3.5 3.8" stroke="#b0b0b0" fill="none" stroke-width="1.1" />
<path d="M76.5 418.5 l3.5 3.8 l-3.5 3.8" stroke="#b0b0b0" fill="none" stroke-width="1.1" />
<path d="M115.5 410.6 Q119 410.8 119 414.3 V428.5 Q119 432 122.5 432 H161 Q164.5 432 164.5 428.5 V414.3 Q164.5 410.8 168 410.6 Z" stroke="none" fill="#ffffff" stroke-width="1" />
<text class="s" x="125" y="425.5" font-size="11" fill="#1a1a1a" font-weight="bold" textLength="32" lengthAdjust="spacingAndGlyphs">Sheet1</text>
<rect x="125" y="428.3" width="32" height="1.6" fill="#2f9c57" />
<line x1="167.2" y1="416" x2="167.2" y2="427.5" stroke="#8a8a8a" stroke-width="1" />
<path d="M199 422.5 h9 M203.5 418 v9" stroke="#e0e0e0" fill="none" stroke-width="1.1" />
<rect x="441.3" y="418.6" width="1.5" height="1.5" fill="#e0e0e0" />
<rect x="441.3" y="422.1" width="1.5" height="1.5" fill="#e0e0e0" />
<rect x="441.3" y="425.6" width="1.5" height="1.5" fill="#e0e0e0" />
<rect x="454.5" y="416.5" width="243.5" height="12.6" fill="#3c3c3c" rx="6.3" />
<path d="M463.6 419.5 v6.6 l-5.4 -3.3 z" stroke="none" fill="#e0e0e0" stroke-width="1" />
<rect x="467.3" y="419.1" width="198.7" height="7.2" fill="#c6c6c6" rx="3.6" />
<path d="M688.8 419.5 v6.6 l5.4 -3.3 z" stroke="none" fill="#e0e0e0" stroke-width="1" />
<rect x="0" y="434.7" width="712" height="17.3" fill="#3d3d3d" />
<text class="s" x="7.6" y="447.4" font-size="8.5" fill="#f0f0f0" textLength="18.1" lengthAdjust="spacingAndGlyphs">Enter</text>
<text class="s" x="42.3" y="447.4" font-size="8.5" fill="#f0f0f0" textLength="19.6" lengthAdjust="spacingAndGlyphs">Sheet</text>
<text class="s" x="66.3" y="447.4" font-size="8.5" fill="#f0f0f0" text-anchor="middle">1</text>
<text class="s" x="75.35" y="447.4" font-size="8.5" fill="#f0f0f0" text-anchor="middle">of</text>
<text class="s" x="83.5" y="447.4" font-size="8.5" fill="#f0f0f0" text-anchor="middle">1</text>
<text class="s" x="97.9" y="447.4" font-size="8.5" fill="#f0f0f0" textLength="36.4" lengthAdjust="spacingAndGlyphs">Workbook</text>
<text class="s" x="137.4" y="447.4" font-size="8.5" fill="#f0f0f0" textLength="30.6" lengthAdjust="spacingAndGlyphs">Statistics</text>
<text class="s" x="221.9" y="447.4" font-size="8.5" fill="#f0f0f0" textLength="43.7" lengthAdjust="spacingAndGlyphs">Accessibility:</text>
<text class="s" x="270.1" y="447.4" font-size="8.5" fill="#f0f0f0" textLength="19.4" lengthAdjust="spacingAndGlyphs">Good</text>
<text class="s" x="295.35" y="447.4" font-size="8.5" fill="#f0f0f0" text-anchor="middle">to</text>
<text class="s" x="307.2" y="447.4" font-size="8.5" fill="#f0f0f0" text-anchor="middle">go</text>
<g fill="none" stroke="#e6e6e6" stroke-width="1" stroke-linejoin="round" stroke-linecap="round">
<!-- macro record -->
<path d="M188 448 h-3.700 v-8.300 h10.500 v3"/>
<path d="M184.300 441.700 h10.500 M186.300 443.700 h0.800" />
<circle cx="191.800" cy="445.800" r="3" fill="#3a3a3a"/>
<circle cx="191.800" cy="445.800" r="1.200" fill="#e6e6e6" stroke="none"/>
<!-- accessibility -->
<circle cx="213.500" cy="439.700" r="1.300"/>
<path d="M209.300 441.300 l3 1.300 h2.500 l3 -1.300 M212.300 442.600 v2.500 l-1.800 4.200 M214.800 442.600 v2.300 l1.200 2"/>
<path d="M215.600 447.200 l1.700 1.800 l3.300 -4"/>
</g>
<g fill="none" stroke="#8c8c8c" stroke-width="1">
<!-- normal view -->
<rect x="514.800" y="439.200" width="9.500" height="9"/>
<path d="M518 439.200 v9 M521.200 439.200 v9 M514.800 442.200 h9.500 M514.800 445.200 h9.500"/>
<!-- page layout -->
<rect x="545.500" y="439.200" width="10.500" height="9"/>
<rect x="548" y="441.200" width="5.500" height="5.200"/>
<rect x="549.800" y="442.800" width="1.900" height="2" fill="#8c8c8c" stroke="none"/>
<!-- page break -->
<path d="M576.300 439.200 h10.500 v9 h-10.500 z M579.800 439.200 v4.500 h7 M583.300 439.200 v4.500"/>
</g>

<line x1="611.2" y1="444.5" x2="689.5" y2="444.5" stroke="#9a9a9a" stroke-width="1" />
<line x1="650.4" y1="441.5" x2="650.4" y2="447.5" stroke="#c0c0c0" stroke-width="1" />
<line x1="601.6" y1="444.5" x2="607.3" y2="444.5" stroke="#7c7c7c" stroke-width="1" />
<path d="M693.3 444.5 h6 M696.3 441.5 v6" stroke="#7c7c7c" fill="none" stroke-width="1" />
<rect x="0" y="0" width="715" height="1.6" fill="#5a5a5a" />
<rect x="0" y="0" width="2" height="454" fill="#454545" />
<rect x="712" y="2" width="3" height="10" fill="#1c1c1c" />
<rect x="712" y="12" width="3" height="440" fill="#e4e4e4" />
<rect x="712" y="284" width="3" height="10.5" fill="#c8c8c8" />
<rect x="712" y="294.5" width="3" height="6.5" fill="#222222" />
<rect x="712" y="301" width="3" height="2.5" fill="#b0b0b0" />
<rect x="712" y="303.5" width="3" height="26.5" fill="#2a2a2a" />
<rect x="713.2" y="335" width="1.8" height="117" fill="#b4b4b4" />
<rect x="712.5" y="78.5" width="2.5" height="1.5" fill="#d02020" />
<rect x="712.5" y="199.8" width="2.5" height="1.5" fill="#d02020" />
<rect x="0" y="451.8" width="715" height="2.2" fill="#b4b4b4" />
<rect x="0" y="451.8" width="154.5" height="0.9" fill="#808080" />
<rect x="0" y="452.7" width="154.5" height="1.3" fill="#1e1e1e" />
</svg>
</body>
</html>
